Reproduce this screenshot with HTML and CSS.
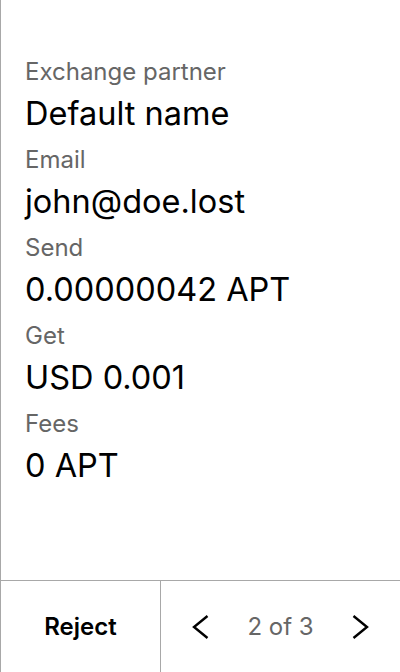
FILE: index.html
```html
<!DOCTYPE html>
<html>
<head>
<meta charset="utf-8">
<link rel="stylesheet" href="styles.css">
</head>
<body>
<div class="screen">
  <div class="content">
    <div class="field"><div class="label">Exchange partner</div><div class="value">Default name</div></div>
    <div class="field"><div class="label">Email</div><div class="value">john@doe.lost</div></div>
    <div class="field"><div class="label">Send</div><div class="value">0.00000042 APT</div></div>
    <div class="field"><div class="label">Get</div><div class="value">USD 0.001</div></div>
    <div class="field"><div class="label">Fees</div><div class="value">0 APT</div></div>
  </div>
  <div class="footer">
    <div class="reject">Reject</div>
    <div class="pager">
      <svg class="chev" width="17" height="24" viewBox="0 0 17 24"><path d="M15.5 1 L2 12 L15.5 23" fill="none" stroke="#000" stroke-width="2.4"/></svg>
      <span class="count">2 of 3</span>
      <svg class="chev" width="17" height="24" viewBox="0 0 17 24"><path d="M1.5 1 L15 12 L1.5 23" fill="none" stroke="#000" stroke-width="2.4"/></svg>
    </div>
  </div>
</div>
</body>
</html>
```
FILE: styles.css
```css
html, body { margin: 0; padding: 0; background: #fff; }
body { font-family: Inter, "Noto Sans", sans-serif; color: #000; }
.screen {
  width: 400px; height: 672px; box-sizing: border-box;
  border-left: 1px solid #a8a8a8;
  display: flex; flex-direction: column;
}
.content { flex: 1; padding: 58px 0 0 24px; display: flex; flex-direction: column; }
.field { display: flex; flex-direction: column; }
.label { font-size: 24px; line-height: 28px; color: #666; margin-bottom: 8px; white-space: nowrap; }
.value { font-size: 32.5px; line-height: 40px; margin-bottom: 12px; white-space: nowrap; }
.footer {
  height: 92px; border-top: 1px solid #a8a8a8; box-sizing: border-box;
  display: flex;
}
.reject {
  width: 159px; border-right: 1px solid #a8a8a8;
  display: flex; align-items: center; justify-content: center;
  font-size: 24px; font-weight: 600;
}
.pager { flex: 1; display: flex; align-items: center; justify-content: space-between; padding: 0 31px; }
.count { font-size: 24px; color: #666; }
.chev { display: block; }
```
